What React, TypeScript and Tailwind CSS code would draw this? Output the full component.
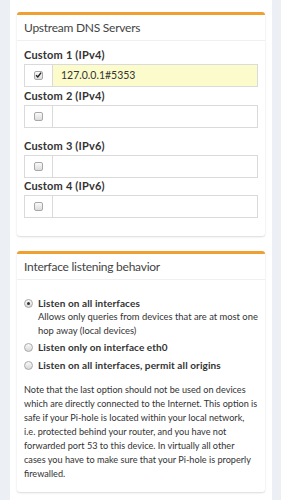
import type { ReactNode } from "react";

const font = { fontFamily: "Lato, 'Liberation Sans', sans-serif" };

function Box({ title, children }: { title: string; children: ReactNode }) {
  return (
    <div className="mb-[15px] rounded-[3px] border-t-[3px] border-[#f0a030] bg-white shadow-[0_1px_2px_rgba(0,0,0,0.15)]">
      <div className="flex h-[26px] items-center border-b border-[#f0f0f0] px-[7px] text-[12px] tracking-[-0.25px] text-[#444]">
        {title}
      </div>
      {children}
    </div>
  );
}

function Check({ checked }: { checked?: boolean }) {
  return (
    <span className="flex h-[9px] w-[9px] items-center justify-center rounded-[2px] border border-[#a8a8a8] bg-gradient-to-b from-[#fafafa] to-[#dcdcdc]">
      {checked && (
        <svg width="8" height="8" viewBox="0 0 8 8" className="-mt-[1px]">
          <path d="M1.2 4.2 L3.2 6.3 L7 1.2" fill="none" stroke="#222" strokeWidth="1.6" />
        </svg>
      )}
    </span>
  );
}

function Radio({ checked }: { checked?: boolean }) {
  return (
    <span className="mt-[3px] flex h-[9px] w-[9px] shrink-0 items-center justify-center rounded-full border border-[#a8a8a8] bg-gradient-to-b from-[#fafafa] to-[#d8d8d8]">
      {checked && <span className="h-[3px] w-[3px] rounded-full bg-[#333]" />}
    </span>
  );
}

function DnsField({ label, value, checked, className }: { label: string; value?: string; checked?: boolean; className?: string }) {
  return (
    <div className={className}>
      <div className="mb-[2px] text-[11px] font-bold leading-[14px] tracking-[0.2px] text-[#333]">{label}</div>
      <div className="flex h-[23px] border border-[#dadada]">
        <div className="flex w-[28px] items-center justify-center border-r border-[#dadada] bg-white">
          <Check checked={checked} />
        </div>
        <div className={`flex flex-1 items-center px-[8px] text-[10.5px] text-[#333] ${value ? "bg-[#fbfbcb]" : "bg-white"}`}>
          {value}
        </div>
      </div>
    </div>
  );
}

export default function App() {
  return (
    <div className="min-h-[500px] bg-[#ecf0f5] pl-[10px] pr-[9px]" style={font}>
      <div className="min-h-[500px] bg-white px-[7px] pt-[12px]">
        <Box title="Upstream DNS Servers">
          <div className="px-[7px] pb-[18px] pt-[7px]">
            <DnsField label="Custom 1 (IPv4)" value="127.0.0.1#5353" checked />
            <DnsField label="Custom 2 (IPv4)" className="mt-[2px]" />
            <DnsField label="Custom 3 (IPv6)" className="mt-[11px]" />
            <DnsField label="Custom 4 (IPv6)" className="mt-[1px]" />
          </div>
        </Box>
        <Box title="Interface listening behavior">
          <div className="px-[7px] pb-[11px] pt-[16px] text-[9.4px] leading-[14px] text-[#333]">
            <div className="flex gap-[5px]">
              <Radio checked />
              <div>
                <div className="text-[10px] font-bold tracking-[0.1px]">Listen on all interfaces</div>
                <div>Allows only queries from devices that are at most one hop away (local devices)</div>
              </div>
            </div>
            <div className="mt-[2px] flex gap-[5px]">
              <Radio />
              <div className="text-[10px] font-bold tracking-[0.1px]">Listen only on interface eth0</div>
            </div>
            <div className="mt-[4px] flex gap-[5px]">
              <Radio />
              <div className="text-[10px] font-bold tracking-[0.1px]">Listen on all interfaces, permit all origins</div>
            </div>
            <p className="mt-[11px] text-[9.15px]">
              Note that the last option should not be used on devices which are directly connected to the Internet. This option is safe if your Pi-hole is located within your local network, i.e. protected behind your router, and you have not forwarded port 53 to this device. In virtually all other cases you have to make sure that your Pi-hole is properly firewalled.
            </p>
          </div>
        </Box>
      </div>
    </div>
  );
}
